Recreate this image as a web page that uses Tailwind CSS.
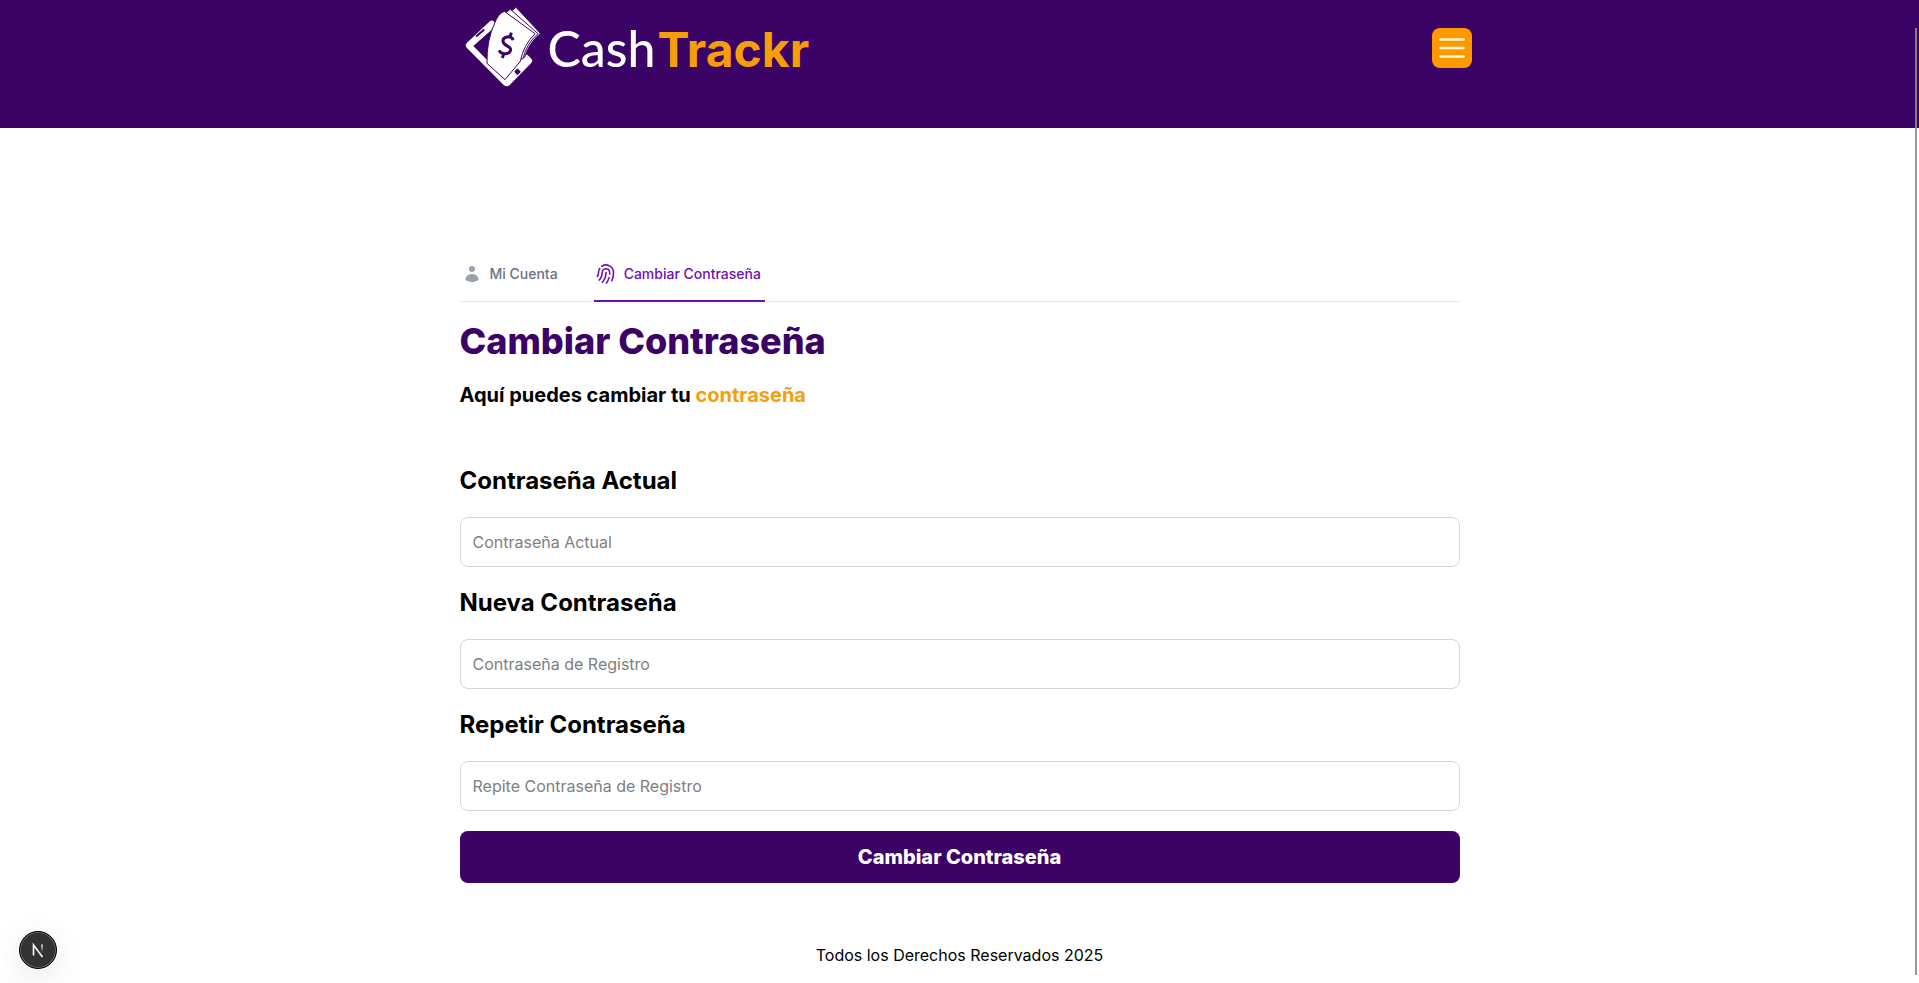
<!DOCTYPE html>
<html lang="es">
<head>
<meta charset="utf-8">
<meta name="viewport" content="width=device-width, initial-scale=1">
<title>CashTrackr - Cambiar Contraseña</title>
<script src="https://cdn.jsdelivr.net/npm/@tailwindcss/browser@4"></script>
</head>
<body class="bg-white font-['Inter',sans-serif] text-black">
  <header class="h-32 bg-purple-950">
    <div class="mx-auto flex max-w-5xl items-center justify-between">
      <a href="#" aria-label="CashTrackr" class="flex h-24 items-center pl-4">
        <svg class="h-22 w-20" viewBox="42 12 240 264" aria-hidden="true">
          <path d="M51 128 118 65Q126 58 133 66L142 74 70 138 168 238 222 186 222 162 232 164 244 176Q250 183 243 190L179 255Q170 263 161 255L51 144Q43 135 51 128Z" fill="#fff"/>
          <path d="M168 250 112 193 130 120 226 168 230 186Z" fill="#fff"/>
          <path d="M80 108 101 90" stroke="#3c0366" stroke-width="6" stroke-linecap="round"/>
          <g fill="#fff" stroke="#3c0366" stroke-width="3" stroke-linejoin="round">
            <path d="M198 22 271 100Q236 130 224 172L200 180 180 36Z"/>
            <path d="M181 28 264 101Q230 130 219 176L195 180 165 40Z"/>
            <path d="M163 34 255 101Q220 136 211 184L165 239 111 190Q109 122 135 67 144 42 163 34Z"/>
          </g>
          <path d="M190 120C182 105 158 109 159 124 160 138 182 137 182 149 180 164 155 166 147 151M184 98 179 114M162 160 157 174" fill="none" stroke="#3c0366" stroke-width="9"/>
          <path d="M202 208 210 215 202 223 195 215Z" fill="#3c0366" stroke="#3c0366" stroke-width="4" stroke-linejoin="round"/>
        </svg>
        <span class="ml-1 font-['Lato',sans-serif] text-[50px] font-medium leading-none text-white">Cash<span class="ml-0.5 font-['Inter',sans-serif] text-5xl font-bold leading-none text-[#f59e0b]">Trackr</span></span>
      </a>
      <button type="button" aria-label="Menú" class="flex size-10 items-center justify-center rounded-lg bg-[#fe9a00]">
        <svg class="size-8" viewBox="0 0 32 32" fill="none" stroke="#fff8d0" stroke-width="2.6" stroke-linecap="round"><path d="M4.500 7.500H27.500M4.500 16H27.500M4.500 24.500H27.500"/></svg>
      </button>
    </div>
  </header>

  <main class="mx-auto mt-28 max-w-5xl px-3 pt-2">
    <nav class="flex h-[54px] gap-8 border-b border-gray-200" aria-label="Tabs">
      <a href="#" class="flex h-[54px] items-center border-b-2 border-transparent px-1 text-sm font-medium text-gray-500">
        <svg class="-ml-0.5 mr-2 size-5 text-gray-400" viewBox="0 0 20 20" fill="currentColor"><path d="M10 8a3 3 0 1 0 0-6 3 3 0 0 0 0 6ZM3.465 14.493a1.23 1.23 0 0 0 .41 1.412A9.957 9.957 0 0 0 10 18c2.310 0 4.438-.784 6.131-2.100.43-.333.604-.903.408-1.410a7.002 7.002 0 0 0-13.074.003Z"/></svg>
        <span>Mi Cuenta</span>
      </a>
      <a href="#" aria-current="page" class="flex h-[54px] items-center border-b-2 border-purple-800 px-1 text-sm font-medium text-purple-800">
        <svg class="-ml-0.5 mr-2 size-5" viewBox="2 2 20 20" fill="none" stroke="currentColor" stroke-width="1.6" stroke-linecap="round" stroke-linejoin="round"><path d="M7.864 4.243A7.500 7.500 0 0 1 19.500 10.500c0 2.920-.556 5.709-1.568 8.268M5.742 6.364A7.465 7.465 0 0 0 4.500 10.500a7.464 7.464 0 0 1-1.150 3.993m1.989 3.559A11.209 11.209 0 0 0 8.250 10.500a3.750 3.750 0 1 1 7.500 0c0 .527-.021 1.049-.064 1.565M12 10.500a14.940 14.940 0 0 1-3.600 9.750m6.633-4.596a18.666 18.666 0 0 1-2.485 5.330"/></svg>
        <span>Cambiar Contraseña</span>
      </a>
    </nav>

    <h1 class="mt-[19px] text-4xl font-extrabold text-purple-950">Cambiar Contraseña</h1>
    <p class="mt-5 text-xl font-bold">Aquí puedes cambiar tu <span class="text-[#f59e0b]">contraseña</span></p>

    <form class="mt-14 flex flex-col gap-5">
      <label for="current" class="text-2xl font-bold">Contraseña Actual</label>
      <input id="current" type="password" placeholder="Contraseña Actual" class="h-[50px] w-full rounded-lg border border-gray-300 px-3 placeholder:text-[#808080]">
      <label for="new" class="text-2xl font-bold">Nueva Contraseña</label>
      <input id="new" type="password" placeholder="Contraseña de Registro" class="h-[50px] w-full rounded-lg border border-gray-300 px-3 placeholder:text-[#808080]">
      <label for="repeat" class="text-2xl font-bold">Repetir Contraseña</label>
      <input id="repeat" type="password" placeholder="Repite Contraseña de Registro" class="h-[50px] w-full rounded-lg border border-gray-300 px-3 placeholder:text-[#808080]">
      <button type="submit" class="h-[52px] w-full rounded-lg bg-purple-950 text-xl font-extrabold text-white">Cambiar Contraseña</button>
    </form>
  </main>
  <footer class="mt-15 text-center">Todos los Derechos Reservados 2025</footer>

  <button type="button" aria-label="Next.js" class="fixed bottom-3.5 left-[19px] flex size-[38px] items-center justify-center rounded-full border border-black bg-[#333] shadow-[0_8px_32px_rgba(0,0,0,0.1)] ring-1 ring-inset ring-[#666]">
    <svg class="size-4" viewBox="0 0 16 16" fill="none">
      <defs><linearGradient id="fade" x1="0" y1="0" x2="0" y2="1"><stop stop-color="#fff"/><stop offset="1" stop-color="#fff" stop-opacity="0"/></linearGradient></defs>
      <path d="M3.500 13.500V3L12.500 15" stroke="#fff" stroke-width="1.6"/>
      <path d="M11.200 2.500H12.800V10H11.200Z" fill="url(#fade)"/>
    </svg>
  </button>
  <div class="fixed bottom-2 right-0.5 top-7 w-0.5 bg-[#8b8b8b]/90" aria-hidden="true"></div>
</body>
</html>
